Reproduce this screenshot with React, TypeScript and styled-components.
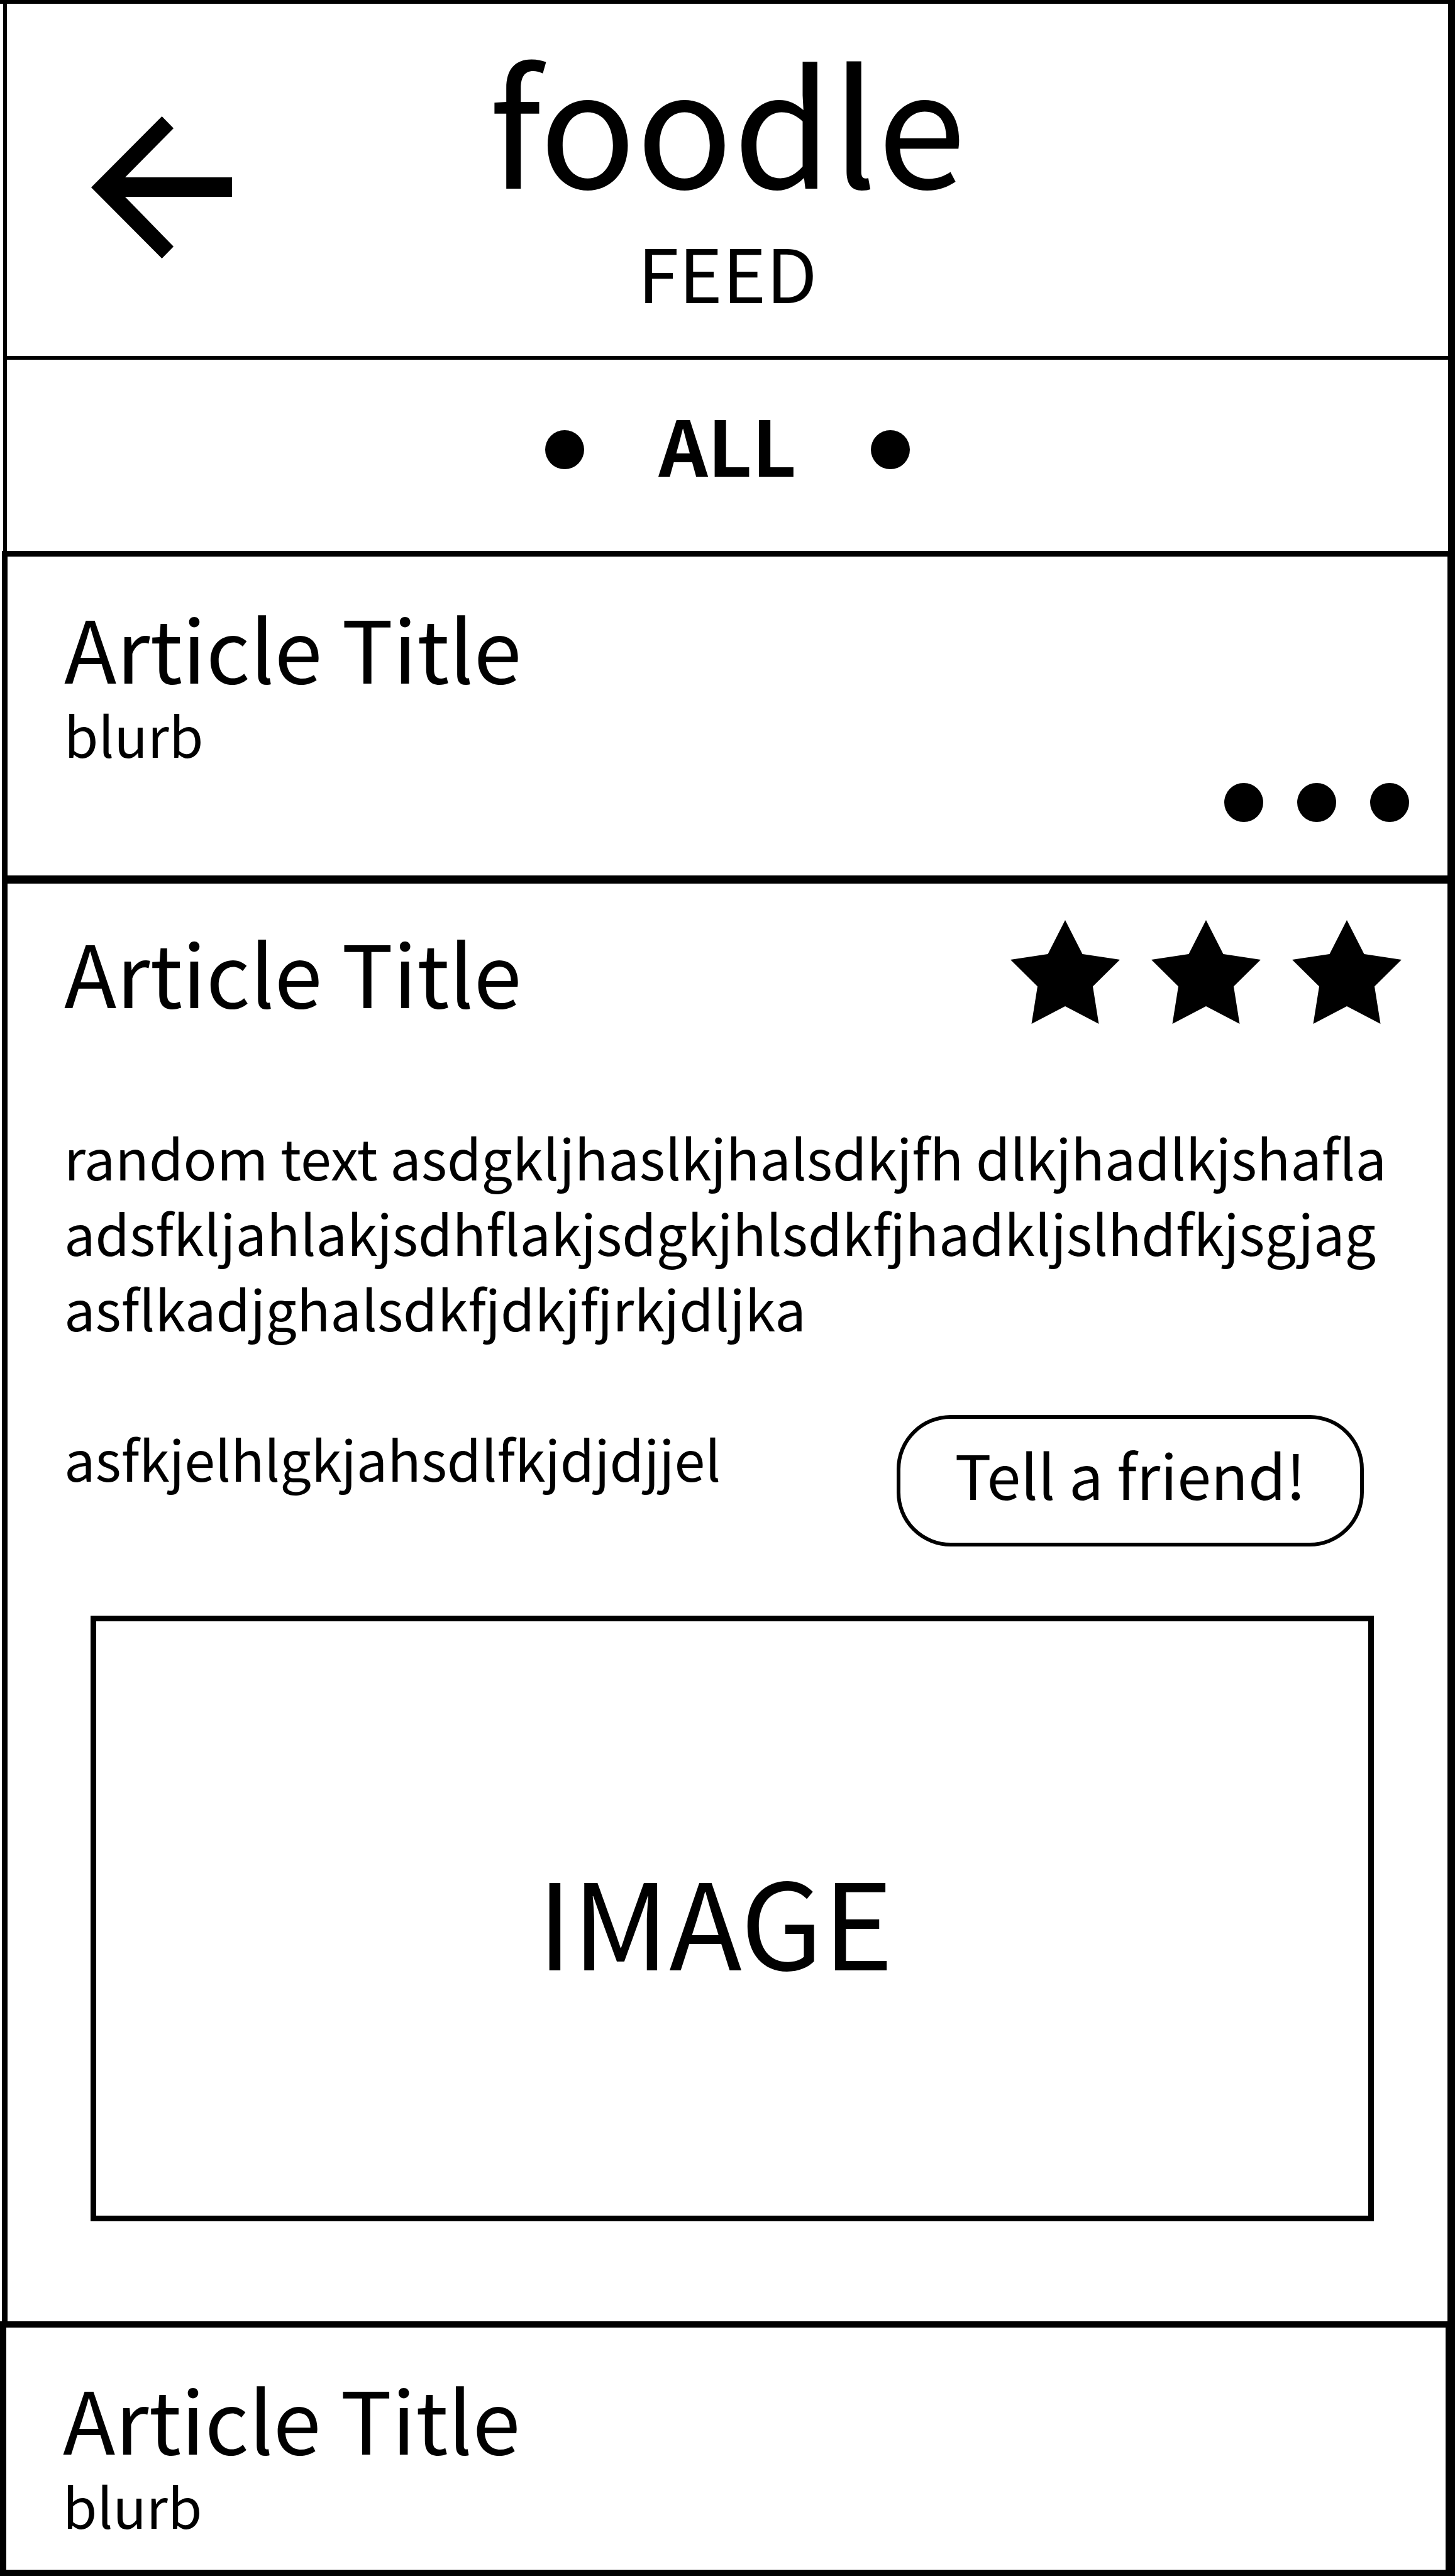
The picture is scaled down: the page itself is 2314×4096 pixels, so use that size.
import React from "react";
import styled, { createGlobalStyle } from "styled-components";

const ink = "#000";
const paper = "#fff";

const GlobalStyle = createGlobalStyle`
  *, *::before, *::after { box-sizing: border-box; }
  body {
    margin: 0;
    background: ${paper};
    color: ${ink};
    font-family: "Noto Sans CJK JP", "Noto Sans", sans-serif;
  }
  h1, h2, p, figure { margin: 0; font-weight: 400; }
  button {
    margin: 0;
    padding: 0;
    border: 0;
    background: none;
    color: inherit;
    font-family: inherit;
    cursor: pointer;
  }
  svg { display: block; }
`;

const Page = styled.main`
  display: flex;
  flex-direction: column;
  min-height: 100vh;
  border-top: 6px solid ${ink};
`;

const Header = styled.header`
  display: grid;
  grid-template-columns: 1fr auto 1fr;
  align-items: start;
  margin-left: 5px;
  padding: 53px 0 70px;
  border: solid ${ink};
  border-width: 0 11px 6px 6px;
`;

const BackButton = styled.button`
  justify-self: start;
  margin: 126px 0 0 134px;
`;

const Brand = styled.div`
  display: flex;
  flex-direction: column;
  align-items: center;
  gap: 47px;
`;

const Logo = styled.h1`
  font-size: 254px;
  line-height: 260px;
`;

const PageName = styled.p`
  font-size: 118px;
  line-height: 130px;
`;

const Filter = styled.nav`
  display: flex;
  justify-content: center;
  align-items: flex-end;
  gap: 118px;
  margin-left: 5px;
  padding: 73px 0 111px;
  border: solid ${ink};
  border-width: 0 11px 0 6px;
`;

const FilterName = styled.p`
  font-size: 122px;
  line-height: 120px;
  font-weight: 700;
`;

const Dot = styled.span`
  width: 62px;
  height: 62px;
  border-radius: 50%;
  background: ${ink};
`;

const FilterButton = styled.button`
  width: 62px;
  height: 62px;
  margin-bottom: 19px;
  border-radius: 50%;
  background: ${ink};
`;

const Article = styled.article<{ $rule: number }>`
  margin-left: 3px;
  padding: 62px 61px 85px 90px;
  border: solid ${ink};
  border-width: ${(p) => p.$rule}px 12px 0 9px;
`;

const OpenArticle = styled(Article)`
  padding: 58px 73px 159px 90px;
`;

const LastArticle = styled(Article)`
  flex: 1;
  margin-left: 0;
  padding-bottom: 40px;
  border-width: ${(p) => p.$rule}px 15px 10px 10px;
`;

const Title = styled.h2`
  font-size: 137px;
  line-height: 160px;
`;

const Text = styled.p`
  font-size: 88px;
  line-height: 120px;
`;

const MoreButton = styled.button`
  display: flex;
  gap: 54px;
  margin: 18px 0 0 auto;
`;

const TitleRow = styled.div`
  display: flex;
  justify-content: space-between;
  align-items: flex-start;
  margin-bottom: 151px;
`;

const Rating = styled.div`
  display: flex;
  gap: 50px;
`;

const ShareRow = styled.div`
  display: flex;
  justify-content: space-between;
  align-items: flex-start;
  margin: 111px 60px 110px 0;
`;

const ShareText = styled(Text)`
  padding-top: 8px;
`;

const ShareButton = styled.button`
  min-width: 743px;
  padding: 0 40px 24px;
  border: 6px solid ${ink};
  border-radius: 86px;
  font-size: 97px;
  line-height: 173px;
`;

const Picture = styled.figure`
  display: flex;
  justify-content: center;
  align-items: center;
  height: 963px;
  margin: 0 44px 0 42px;
  padding-right: 54px;
  border: 9px solid ${ink};
  font-size: 190px;
  line-height: 200px;
`;

const BackArrow = () => (
  <svg width="224" height="226" viewBox="0 0 224 226" aria-hidden="true">
    <path d="M0 113 112.5 0 131 19 54 97H224V128H54L131 207 112.5 226Z" fill={ink} />
  </svg>
);

const Star = () => (
  <svg width="174" height="165" viewBox="0 0 174 165" aria-hidden="true">
    <path
      d="M87 0 114.5 54 174 63 131 105.5 140.5 165 87 137 33.5 165 43 105.5 0 63 59.5 54Z"
      fill={ink}
    />
  </svg>
);

export default function App() {
  return (
    <>
      <GlobalStyle />
      <Page>
        <Header>
          <BackButton type="button" aria-label="Back">
            <BackArrow />
          </BackButton>
          <Brand>
            <Logo>foodle</Logo>
            <PageName>FEED</PageName>
          </Brand>
        </Header>

        <Filter aria-label="Feed filter">
          <FilterButton type="button" aria-label="Previous filter" />
          <FilterName>ALL</FilterName>
          <FilterButton type="button" aria-label="Next filter" />
        </Filter>

        <Article $rule={9}>
          <Title>Article Title</Title>
          <Text>blurb</Text>
          <MoreButton type="button" aria-label="More">
            <Dot />
            <Dot />
            <Dot />
          </MoreButton>
        </Article>

        <OpenArticle $rule={13}>
          <TitleRow>
            <Title>Article Title</Title>
            <Rating role="img" aria-label="3 stars">
              <Star />
              <Star />
              <Star />
            </Rating>
          </TitleRow>
          <Text>
            random text asdgkljhaslkjhalsdkjfh dlkjhadlkjshafla
            adsfkljahlakjsdhflakjsdgkjhlsdkfjhadkljslhdfkjsgjag
            asflkadjghalsdkfjdkjfjrkjdljka
          </Text>
          <ShareRow>
            <ShareText>asfkjelhlgkjahsdlfkjdjdjjel</ShareText>
            <ShareButton type="button">Tell a friend!</ShareButton>
          </ShareRow>
          <Picture>IMAGE</Picture>
        </OpenArticle>

        <LastArticle $rule={10}>
          <Title>Article Title</Title>
          <Text>blurb</Text>
        </LastArticle>
      </Page>
    </>
  );
}
